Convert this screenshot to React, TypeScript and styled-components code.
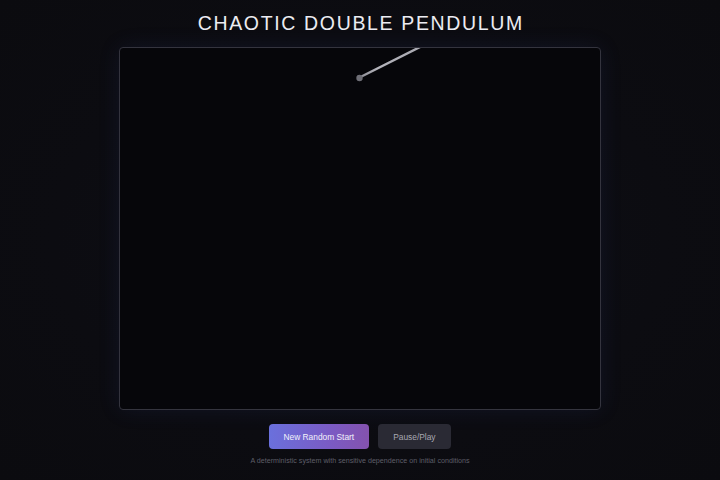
import React from "react";
import styled, { createGlobalStyle } from "styled-components";

const Global = createGlobalStyle`
  html, body { margin: 0; padding: 0; background: #0c0c11; }
  body { font-family: "Liberation Sans", Arial, sans-serif; }
  #root { min-height: 100vh; }
`;

const Page = styled.div`
  width: 720px;
  height: 480px;
  display: flex;
  flex-direction: column;
  align-items: center;
  background: radial-gradient(ellipse at 50% 50%, #0e0f16 0%, #0c0c11 60%, #0b0b0f 100%);
  overflow: hidden;
`;

const Title = styled.h1`
  margin: 0;
  height: 47px;
  line-height: 47px;
  font-size: 19.5px;
  font-weight: 400;
  letter-spacing: 1.65px;
  color: #ececf2;
  text-indent: 1.65px;
`;

const CanvasFrame = styled.div`
  width: 480px;
  height: 361px;
  border: 1px solid #34343e;
  border-radius: 4px;
  background: #06060a;
  box-shadow: 0 0 22px rgba(60, 80, 170, 0.12);
  overflow: hidden;
  display: flex;
`;

const Drawing = styled.svg`
  display: block;
  width: 480px;
  height: 361px;
`;

const Controls = styled.div`
  display: flex;
  gap: 9px;
  margin-top: 14px;
  align-items: center;
`;

const Button = styled.button<{ $primary?: boolean }>`
  height: 25px;
  padding: 0 ${(p) => (p.$primary ? "14.5px" : "15.5px")};
  border: none;
  border-radius: 4px;
  font-family: "Liberation Sans", Arial, sans-serif;
  font-size: 8.4px;
  color: ${(p) => (p.$primary ? "#f2f2fa" : "#a8a8b2")};
  background: ${(p) =>
    p.$primary
      ? "linear-gradient(90deg, #6a70dc 0%, #7a5bc4 60%, #8452ae 100%)"
      : "#2a2a34"};
  cursor: pointer;
`;

const Footer = styled.p`
  margin: 8px 0 0;
  font-size: 7.15px;
  color: #5e5e68;
`;

export default function App() {
  return (
    <>
      <Global />
      <Page>
        <Title>CHAOTIC DOUBLE PENDULUM</Title>
        <CanvasFrame>
          <Drawing viewBox="0 0 480 361">
            <defs>
              <linearGradient id="arm" x1="239" y1="30" x2="301" y2="-2" gradientUnits="userSpaceOnUse">
                <stop offset="0" stopColor="#8a8a92" />
                <stop offset="0.3" stopColor="#b4b4bc" />
                <stop offset="1" stopColor="#a8a8b0" />
              </linearGradient>
            </defs>
            <line x1="239.5" y1="29.5" x2="302" y2="-2" stroke="url(#arm)" strokeWidth="2.4" strokeLinecap="round" />
            <circle cx="239.5" cy="30" r="3.2" fill="#6e6e76" />
          </Drawing>
        </CanvasFrame>
        <Controls>
          <Button $primary>New Random Start</Button>
          <Button>Pause/Play</Button>
        </Controls>
        <Footer>A deterministic system with sensitive dependence on initial conditions</Footer>
      </Page>
    </>
  );
}
